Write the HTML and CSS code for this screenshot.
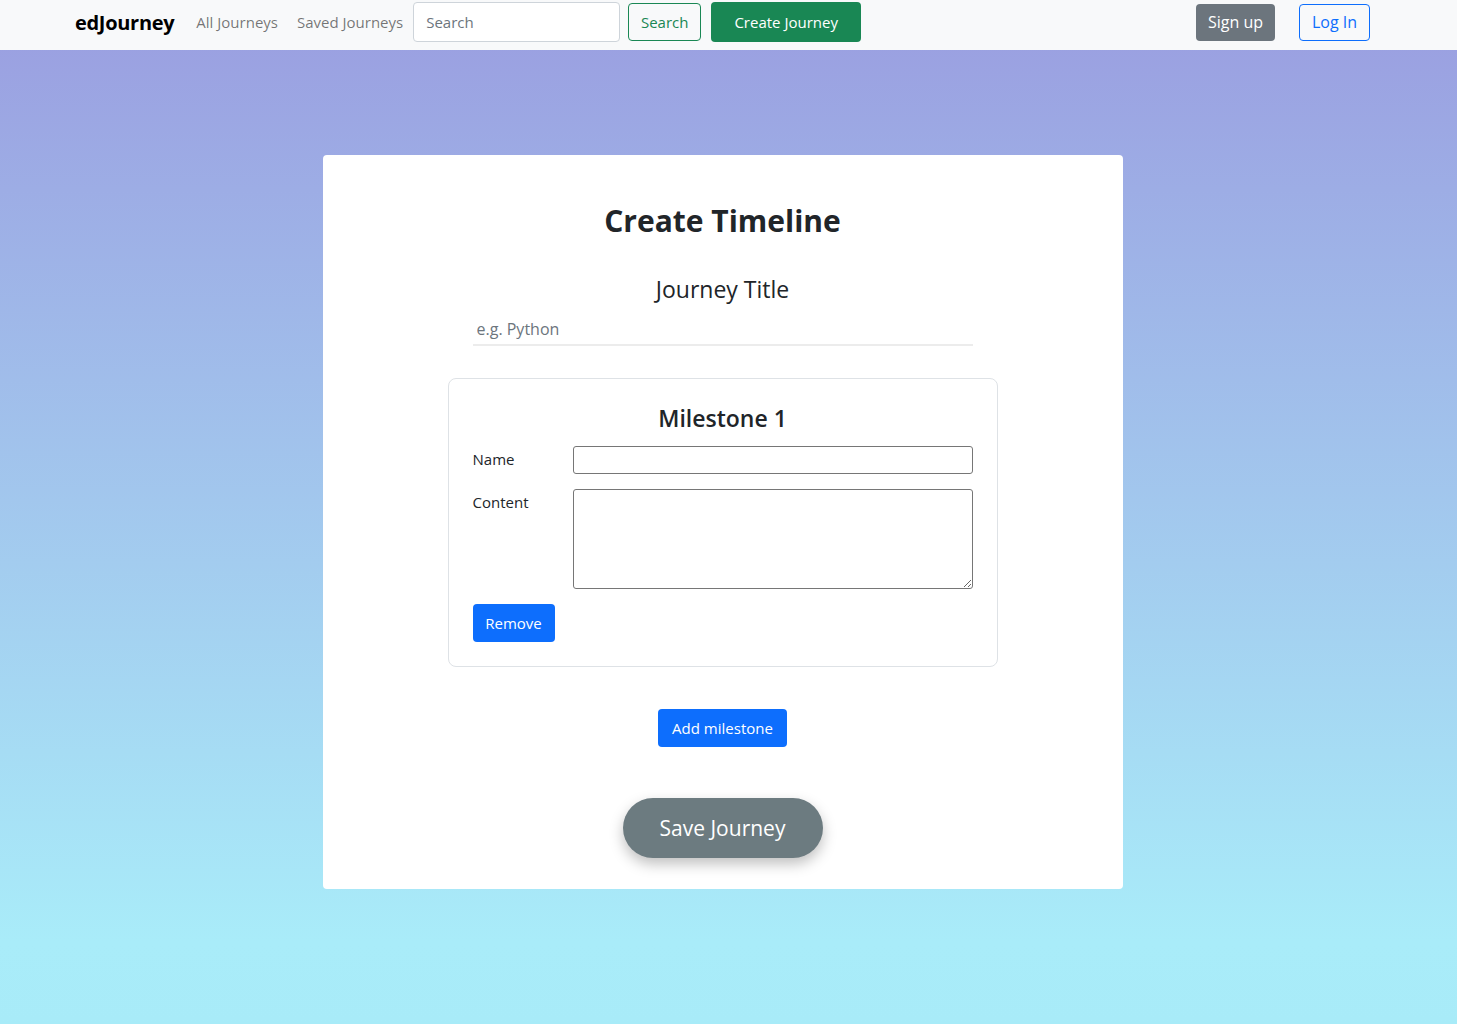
FILE: index.html
```html
<!DOCTYPE html>
<html lang="en">
<head>
<meta charset="utf-8">
<title>edJourney - Create Timeline</title>
<link rel="stylesheet" href="styles.css">
</head>
<body>
<nav class="navbar">
  <div class="nav-left">
    <a class="brand" href="#">edJourney</a>
    <a class="nav-link" href="#">All Journeys</a>
    <a class="nav-link" href="#">Saved Journeys</a>
    <form class="search-form">
      <input class="search-input" type="text" placeholder="Search">
      <button class="btn btn-outline-success" type="button">Search</button>
    </form>
    <button class="btn btn-success create-btn" type="button">Create Journey</button>
  </div>
  <div class="nav-right">
    <button class="btn btn-secondary" type="button">Sign up</button>
    <button class="btn btn-outline-primary" type="button">Log In</button>
  </div>
</nav>

<main class="page">
  <section class="card">
    <h1 class="title">Create Timeline</h1>
    <h2 class="subtitle">Journey Title</h2>
    <input class="title-input" type="text" placeholder="e.g. Python">

    <div class="milestone">
      <h3 class="milestone-title">Milestone 1</h3>
      <div class="row">
        <label class="label">Name</label>
        <input class="field" type="text">
      </div>
      <div class="row">
        <label class="label">Content</label>
        <textarea class="field area"></textarea>
      </div>
      <button class="btn btn-primary" type="button">Remove</button>
    </div>

    <button class="btn btn-primary add-btn" type="button">Add milestone</button>
    <button class="save-btn" type="button">Save Journey</button>
  </section>
</main>
</body>
</html>
```

FILE: styles.css
```css
* { box-sizing: border-box; }
html, body { margin: 0; padding: 0; }
body {
  font-family: "Open Sans", "Noto Sans", sans-serif;
  font-size: 16px;
  color: #212529;
  min-height: 1024px;
  background: linear-gradient(to bottom, #9a9de0 0%, #a9ecf9 92%, #a8ebf8 100%);
}
.navbar {
  height: 50px;
  background: #f8f9fa;
  display: flex;
  align-items: center;
  justify-content: space-between;
  padding: 0 87px 6px 75px;
}
.nav-left, .nav-right { display: flex; align-items: center; }
.brand {
  font-weight: 700;
  font-size: 20px;
  color: #000;
  text-decoration: none;
  margin-right: 22px;
  letter-spacing: -0.3px;
}
.nav-link {
  color: rgba(0,0,0,.55);
  text-decoration: none;
  font-size: 15px;
  margin-right: 19px;
  white-space: nowrap;
}
.nav-link + .nav-link { margin-right: 10px; }
.search-form { display: flex; align-items: center; }
.search-input {
  width: 207px;
  height: 40px;
  border: 1px solid #ced4da;
  border-radius: 4px;
  padding: 0 12px;
  font: inherit;
  font-size: 15px;
  margin-right: 8px;
  background: #fff;
}
.search-input::placeholder { color: #6c757d; }
.btn {
  font-family: inherit;
  font-size: 15px;
  border-radius: 4px;
  border: 1px solid transparent;
  padding: 0 8px;
  height: 38px;
  cursor: pointer;
  line-height: 1;
  white-space: nowrap;
}
.btn-outline-success {
  background: transparent;
  color: #198754;
  border-color: #198754;
  width: 73px;
}
.create-btn {
  margin-left: 10px;
  background: #198754;
  color: #fff;
  width: 150px;
  height: 40px;
}
.btn-secondary {
  background: #6c757d;
  color: #fff;
  width: 79px;
  height: 37px;
  font-size: 16px;
}
.btn-outline-primary {
  background: transparent;
  color: #0d6efd;
  border-color: #0d6efd;
  width: 71px;
  height: 37px;
  margin-left: 24px;
  font-size: 16px;
}
.page {
  display: flex;
  justify-content: center;
  padding: 105px 12px 134px 0;
}
.card {
  width: 800px;
  background: #fff;
  border-radius: 4px;
  display: flex;
  flex-direction: column;
  align-items: center;
  padding: 48px 0 31px;
}
.title {
  margin: 0;
  font-size: 30px;
  font-weight: 700;
  line-height: 1.2;
}
.subtitle {
  margin: 37px 0 0;
  font-size: 23px;
  font-weight: 400;
  line-height: 1.2;
}
.title-input {
  margin-top: 10px;
  width: 500px;
  height: 32px;
  border: none;
  border-bottom: 2px solid #ececec;
  padding: 0 4px;
  font: inherit;
  font-size: 16px;
  outline: none;
}
.title-input::placeholder { color: #6c757d; }
.milestone {
  margin-top: 32px;
  width: 550px;
  border: 1px solid #dee2e6;
  border-radius: 8px;
  padding: 26px 24px 24px;
  display: flex;
  flex-direction: column;
}
.milestone-title {
  margin: 0 0 14px;
  text-align: center;
  font-size: 23px;
  font-weight: 600;
  line-height: 1.2;
}
.row {
  display: flex;
  align-items: flex-start;
  margin-bottom: 15px;
}
.label {
  width: 100px;
  font-size: 15px;
  padding-top: 3px;
}
.field {
  width: 400px;
  height: 28px;
  border: 1px solid #767676;
  border-radius: 3px;
  font: inherit;
  background: #fff;
}
.area {
  height: 100px;
  resize: vertical;
}
.btn-primary {
  background: #0d6efd;
  color: #fff;
  align-self: flex-start;
  width: 82px;
  font-size: 15px;
}
.add-btn {
  align-self: center;
  margin-top: 42px;
  width: 129px;
  font-size: 15px;
}
.save-btn {
  margin-top: 51px;
  width: 200px;
  height: 60px;
  border-radius: 30px;
  border: none;
  background: #6c7b80;
  color: #fff;
  font-family: inherit;
  font-size: 21px;
  box-shadow: 0 6px 14px rgba(0,0,0,.25);
  cursor: pointer;
}
```
